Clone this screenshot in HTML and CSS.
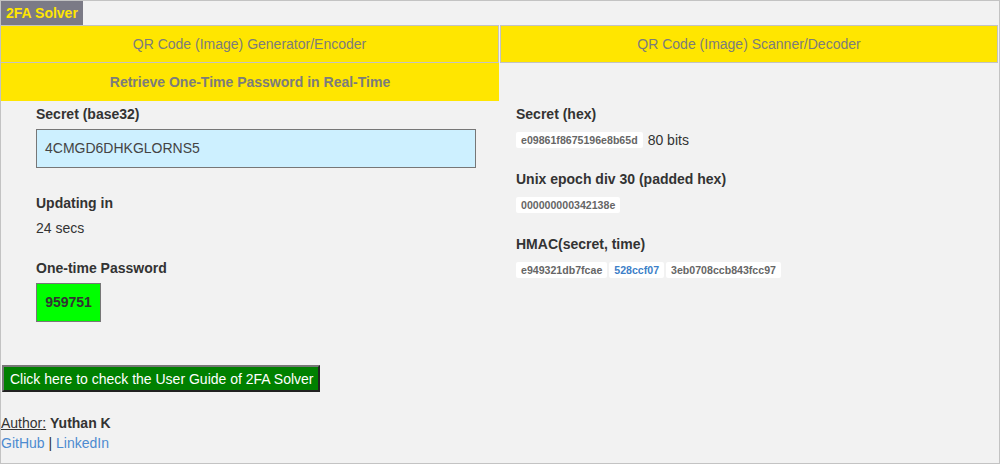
FILE: index.html
```html
<!DOCTYPE html>
<html>
<head>
<meta charset="utf-8">
<link rel="stylesheet" href="styles.css">
</head>
<body>
<div class="page">
  <div class="brand">2FA Solver</div>
  <div class="tabs">
    <div class="tab">QR Code (Image) Generator/Encoder</div>
    <div class="tab">QR Code (Image) Scanner/Decoder</div>
  </div>
  <div class="active-tab">Retrieve One-Time Password in Real-Time</div>
  <div class="main">
    <div class="col-left">
      <div class="label">Secret (base32)</div>
      <div class="secret-input">4CMGD6DHKGLORNS5</div>
      <div class="label label-gap">Updating in</div>
      <div class="value">24 secs</div>
      <div class="label label-gap2">One-time Password</div>
      <div class="otp">959751</div>
    </div>
    <div class="col-right">
      <div class="label">Secret (hex)</div>
      <div class="chip-row"><span class="chip">e09861f8675196e8b65d</span><span class="bits">80 bits</span></div>
      <div class="label rlabel">Unix epoch div 30 (padded hex)</div>
      <div class="chip-row"><span class="chip">000000000342138e</span></div>
      <div class="label rlabel">HMAC(secret, time)</div>
      <div class="chip-row"><span class="chip">e949321db7fcae</span><span class="chip chip-blue">528ccf07</span><span class="chip">3eb0708ccb843fcc97</span></div>
    </div>
  </div>
  <div class="footer">
    <button class="guide-btn">Click here to check the User Guide of 2FA Solver</button>
    <div class="author"><span class="author-lbl">Author:</span> <b>Yuthan K</b></div>
    <div class="links"><a href="#">GitHub</a> | <a href="#">LinkedIn</a></div>
  </div>
</div>
</body>
</html>
```
FILE: styles.css
```css
* { box-sizing: border-box; }
html, body { margin: 0; padding: 0; }
body {
  font-family: "Liberation Sans", Arial, sans-serif;
  background: #f2f2f2;
  color: #333;
}
.page {
  width: 1000px;
  height: 464px;
  border: 1px solid #c3c3c3;
  background: #f2f2f2;
  overflow: hidden;
}
.brand {
  display: inline-block;
  background: #7b7a86;
  color: #ffe600;
  font-weight: bold;
  font-size: 14px;
  height: 24px;
  line-height: 24px;
  padding: 0 5px 0 5px;
  vertical-align: top;
}
.tabs {
  display: grid;
  grid-template-columns: 499px 499px;
  margin-left: -1px;
}
.tab {
  background: #ffe600;
  border: 1px solid #c3c3c3;
  height: 38px;
  line-height: 36px;
  text-align: center;
  font-size: 14px;
  color: #7c7c7c;
}
.tab + .tab { margin-left: 1px; }
.active-tab {
  width: 498px;
  height: 38px;
  line-height: 38px;
  background: #ffe600;
  text-align: center;
  font-size: 14px;
  font-weight: bold;
  color: #7c7c7c;
}
.main {
  display: grid;
  grid-template-columns: 479px 1fr;
  height: 264px;
}
.col-left { padding-left: 35px; padding-top: 5px; }
.col-right { padding-left: 36px; padding-top: 5px; }
.label {
  font-size: 14px;
  font-weight: bold;
  line-height: 16px;
  color: #333;
}
.secret-input {
  margin-top: 7px;
  width: 440px;
  height: 39px;
  border: 1px solid #777;
  background: #cdf0ff;
  font-size: 14px;
  line-height: 37px;
  padding-left: 8px;
  color: #444;
}
.label-gap { margin-top: 27px; }
.value { font-size: 14px; margin-top: 9px; line-height: 16px; color: #333; }
.label-gap2 { margin-top: 24px; }
.otp {
  margin-top: 7px;
  width: 65px;
  height: 39px;
  border: 1px solid #777;
  background: #00ff00;
  font-size: 14px;
  font-weight: bold;
  line-height: 37px;
  text-align: center;
  color: #333;
}
.chip-row {
  display: flex;
  align-items: center;
  gap: 2px;
  margin-top: 10px;
  height: 16px;
}
.chip {
  background: #fff;
  border-radius: 2px;
  font-size: 10.6px;
  font-weight: bold;
  color: #666;
  height: 16px;
  line-height: 16px;
  padding: 0 5px;
}
.chip-blue { color: #3d80c8; }
.bits { font-size: 14px; color: #333; margin-left: 3px; }
.rlabel { margin-top: 23px; }
.footer { padding-left: 0; }
.guide-btn {
  display: block;
  margin-left: 1px;
  font-family: "Liberation Sans", Arial, sans-serif;
  background: #008000;
  color: #fff;
  font-size: 14px;
  height: 27px;
  width: 318px;
  padding: 0 6px;
  border: 2px solid;
  border-color: #777 #222 #222 #777;
  text-align: left;
  white-space: nowrap;
}
.author { margin-top: 23px; font-size: 14px; line-height: 16px; color: #333; }
.author-lbl { text-decoration: underline; }
.links { margin-top: 4px; font-size: 14px; line-height: 16px; color: #333; }
.links a { color: #4d8bd0; text-decoration: none; }
```
